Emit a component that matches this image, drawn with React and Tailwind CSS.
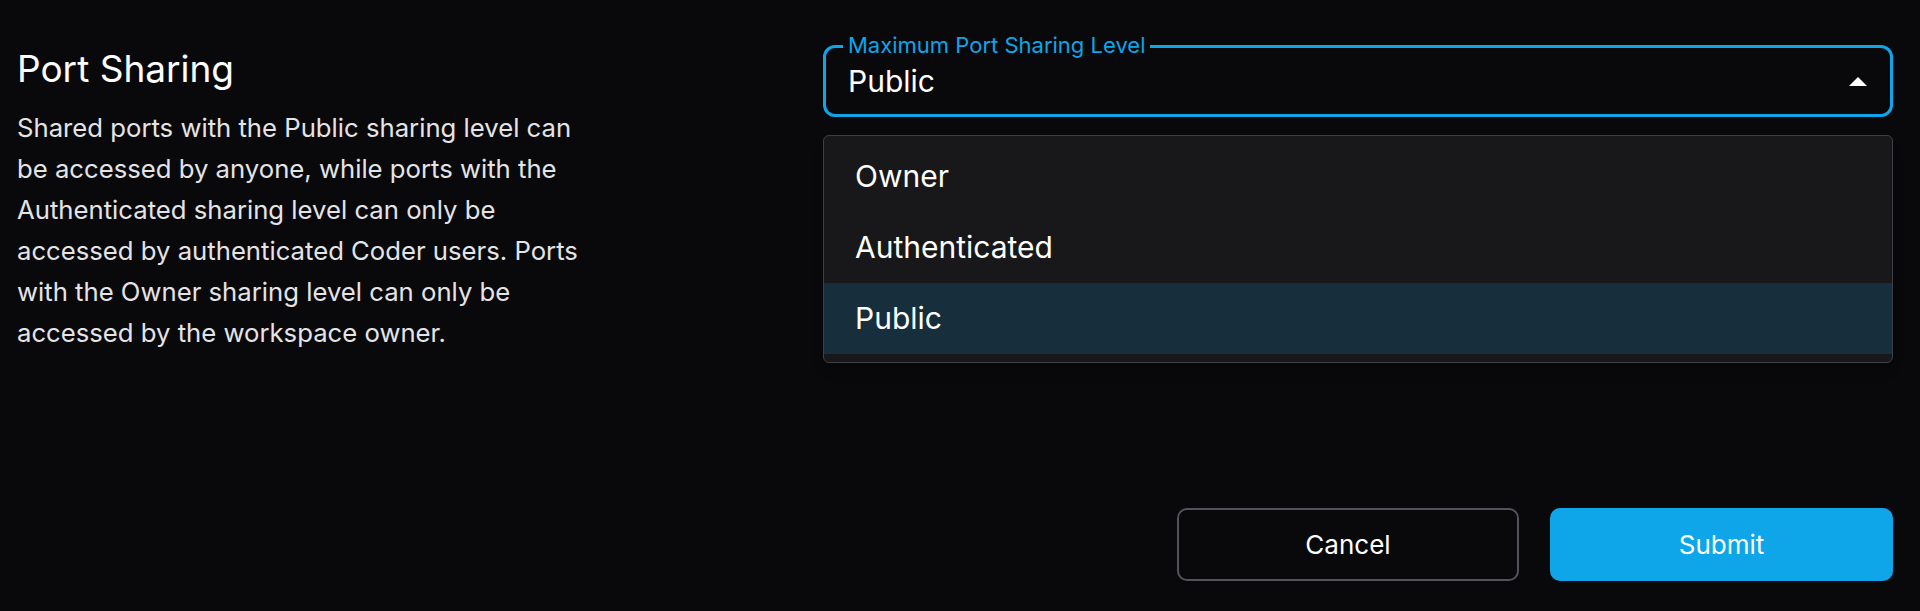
import React from "react";

function TriangleUp() {
  return (
    <svg width="18" height="9" viewBox="0 0 18 9" className="block">
      <path d="M0 9 L9 0 L18 9 Z" fill="#ffffff" />
    </svg>
  );
}

export default function App() {
  const options = ["Owner", "Authenticated", "Public"];
  const selected = "Public";
  return (
    <div
      className="w-full min-h-[611px] bg-[#09090b] text-[#fafafa] overflow-hidden"
      style={{ fontFamily: "Inter, 'Noto Sans', sans-serif" }}
    >
      <div className="flex pl-[17px] pr-[27px] pt-[45px]">
        <div className="w-[806px] shrink-0">
          <div className="w-[582px]">
            <h2 className="mt-[3px] text-[37px] leading-[42px] font-normal text-white">Port Sharing</h2>
            <p className="mt-[17px] text-[25.7px] leading-[41px] text-[#e4e4e7]">
              Shared ports with the Public sharing level can be accessed by anyone, while ports with the Authenticated sharing level can only be accessed by authenticated Coder users. Ports with the Owner sharing level can only be accessed by the workspace owner.
            </p>
          </div>
        </div>
        <div className="flex-1 flex flex-col">
          <div className="relative">
            <div className="relative h-[72px] rounded-[12px] border-[3px] border-[#0ea5e9] flex items-center pl-[22px] pr-[23px]">
              <span className="absolute left-[17px] top-[-14px] px-[5px] bg-[#09090b] text-[22px] leading-[22px] text-[#0ea5e9]">
                Maximum Port Sharing Level
              </span>
              <span className="flex-1 text-[30px] leading-none text-white">{selected}</span>
              <TriangleUp />
            </div>
            <div className="absolute left-0 right-0 top-[90px] z-10 rounded-[6px] border border-[#3f3f46] bg-[#18181b] pt-[5px] pb-[8px] shadow-lg">
              {options.map((o) => (
                <div
                  key={o}
                  className={
                    o === selected
                      ? "h-[71px] flex items-center pl-[31px] text-[30px] text-white bg-[#172e3c]"
                      : "h-[71px] flex items-center pl-[31px] text-[30px] text-white"
                  }
                >
                  {o}
                </div>
              ))}
            </div>
          </div>
          <div className="mt-[391px] flex justify-end gap-[31px]">
            <button className="w-[342px] h-[73px] rounded-[10px] border-2 border-[#52525b] bg-[#09090b] text-[26px] font-normal text-white">
              Cancel
            </button>
            <button className="w-[343px] h-[73px] rounded-[10px] bg-[#0ea5e9] text-[26px] font-normal text-white">
              Submit
            </button>
          </div>
        </div>
      </div>
    </div>
  );
}
